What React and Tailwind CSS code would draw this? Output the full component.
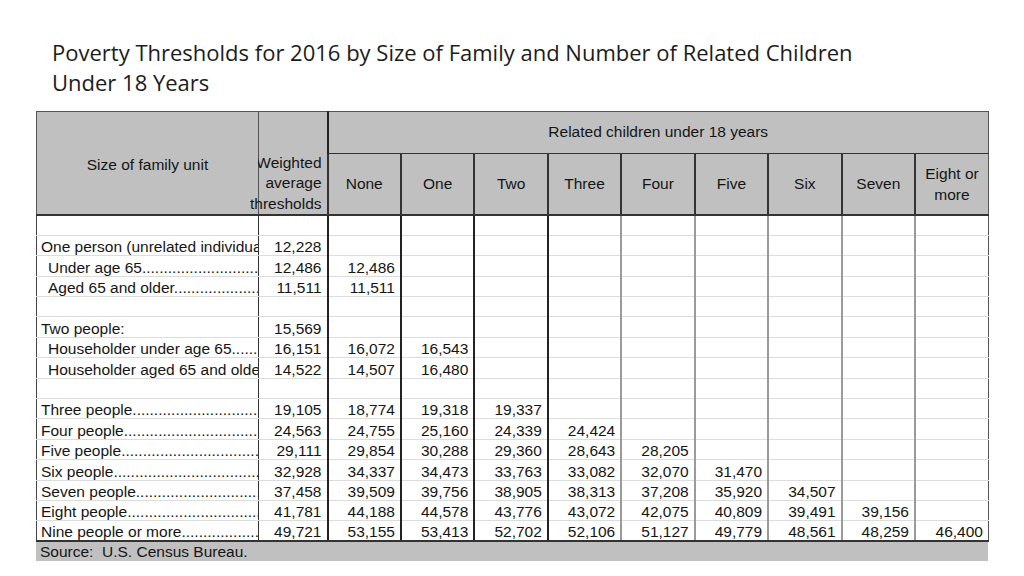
import React from "react";

const dots = ".".repeat(80);

const rows = [
  { label: "", values: [] },
  { label: "One person (unrelated individuals)", values: ["12,228"] },
  { label: "Under age 65" + dots, indent: true, values: ["12,486", "12,486"] },
  { label: "Aged 65 and older" + dots, indent: true, values: ["11,511", "11,511"] },
  { label: "", values: [] },
  { label: "Two people:", values: ["15,569"] },
  { label: "Householder under age 65" + dots, indent: true, values: ["16,151", "16,072", "16,543"] },
  { label: "Householder aged 65 and older", indent: true, values: ["14,522", "14,507", "16,480"] },
  { label: "", values: [] },
  { label: "Three people" + dots, values: ["19,105", "18,774", "19,318", "19,337"] },
  { label: "Four people" + dots, values: ["24,563", "24,755", "25,160", "24,339", "24,424"] },
  { label: "Five people" + dots, values: ["29,111", "29,854", "30,288", "29,360", "28,643", "28,205"] },
  { label: "Six people" + dots, values: ["32,928", "34,337", "34,473", "33,763", "33,082", "32,070", "31,470"] },
  { label: "Seven people" + dots, values: ["37,458", "39,509", "39,756", "38,905", "38,313", "37,208", "35,920", "34,507"] },
  { label: "Eight people" + dots, values: ["41,781", "44,188", "44,578", "43,776", "43,072", "42,075", "40,809", "39,491", "39,156"] },
  { label: "Nine people or more" + dots, values: ["49,721", "53,155", "53,413", "52,702", "52,106", "51,127", "49,779", "48,561", "48,259", "46,400"] },
];

const childCols = ["None", "One", "Two", "Three", "Four", "Five", "Six", "Seven"];

// left border of each value column in the body (weighted, None ... Eight or more)
const bodyLeft = [
  "border-l border-l-[#333]",
  "border-l-2 border-l-[#222]",
  "border-l-2 border-l-[#222]",
  "border-l-2 border-l-[#222]",
  "border-l-2 border-l-[#222]",
  "border-l-2 border-l-[#9a9a9a]",
  "border-l-2 border-l-[#9a9a9a]",
  "border-l-2 border-l-[#9a9a9a]",
  "border-l-2 border-l-[#9a9a9a]",
  "border-l-2 border-l-[#9a9a9a] border-r border-r-[#555]",
];

export default function App() {
  return (
    <div className="w-[1024px] h-[576px] bg-white overflow-hidden text-[#151515]">
      <div className="pt-[37px] pl-[52px] font-['Open_Sans',sans-serif] text-[22px] leading-[30px] text-[#1c1c1c]">
        <div>Poverty Thresholds for 2016 by Size of Family and Number of Related Children</div>
        <div>Under 18 Years</div>
      </div>

      <div className="ml-[36px] mt-[14px] w-[952px] font-['Liberation_Sans',Arial,sans-serif] text-[15.5px] leading-[18px]">
        <table className="w-[952px] table-fixed border-collapse">
          <colgroup>
            <col className="w-[222px]" />
            <col className="w-[69px]" />
            {Array.from({ length: 9 }).map((_, i) => (
              <col key={i} className="w-[73.44px]" />
            ))}
          </colgroup>
          <thead className="bg-[#c0c0c0]">
            <tr className="h-[41px]">
              <th
                rowSpan={2}
                className="border-l border-t border-[#555] border-b-2 border-b-[#333] font-normal text-center align-middle pt-[4px]"
              >
                Size of family unit
              </th>
              <th
                rowSpan={2}
                className="border-l border-l-[#555] border-t border-t-[#555] border-b-2 border-b-[#333] font-normal text-right align-top pr-[5px] pt-[40.5px] pb-0 leading-[20.5px]"
              >
                <div className="flex flex-col items-end">
                  <div className="w-[64px] overflow-hidden whitespace-nowrap flex justify-end">Weighted</div>
                  <div className="whitespace-nowrap">average</div>
                  <div className="whitespace-nowrap">thresholds</div>
                </div>
              </th>
              <th
                colSpan={9}
                className="border-l-2 border-l-[#222] border-t border-t-[#555] border-r border-r-[#555] border-b border-b-[#333] font-normal text-center"
              >
                Related children under 18 years
              </th>
            </tr>
            <tr className="h-[61px]">
              {childCols.map((c) => (
                <th
                  key={c}
                  className="border-l-2 border-l-[#333] border-b-2 border-b-[#333] font-normal text-center"
                >
                  {c}
                </th>
              ))}
              <th className="border-l-2 border-l-[#333] border-r border-r-[#555] border-b-2 border-b-[#333] font-normal text-center leading-[21px]">
                Eight or
                <br />
                more
              </th>
            </tr>
          </thead>
          <tbody>
            {rows.map((r, i) => {
              const last = i === rows.length - 1;
              const rowB = last ? "border-b-2 border-b-[#333]" : "border-b border-b-[#dcdcdc]";
              return (
                <tr key={i} className="h-[20.4px]">
                  <td
                    className={`border-l border-l-[#444] ${rowB} p-0 align-bottom leading-[16px] ${r.indent ? "pl-[11px]" : "pl-[4px]"}`}
                  >
                    <div className="overflow-hidden whitespace-nowrap">{r.label}</div>
                  </td>
                  {bodyLeft.map((b, j) => (
                    <td key={j} className={`${b} ${rowB} p-0 pr-[5px] align-bottom leading-[16px] text-right whitespace-nowrap`}>
                      {r.values[j] || ""}
                    </td>
                  ))}
                </tr>
              );
            })}
          </tbody>
        </table>
        <div className="h-[19px] bg-[#c0c0c0] pl-[4px] leading-[20px] whitespace-pre">Source:  U.S. Census Bureau.</div>
      </div>
    </div>
  );
}
